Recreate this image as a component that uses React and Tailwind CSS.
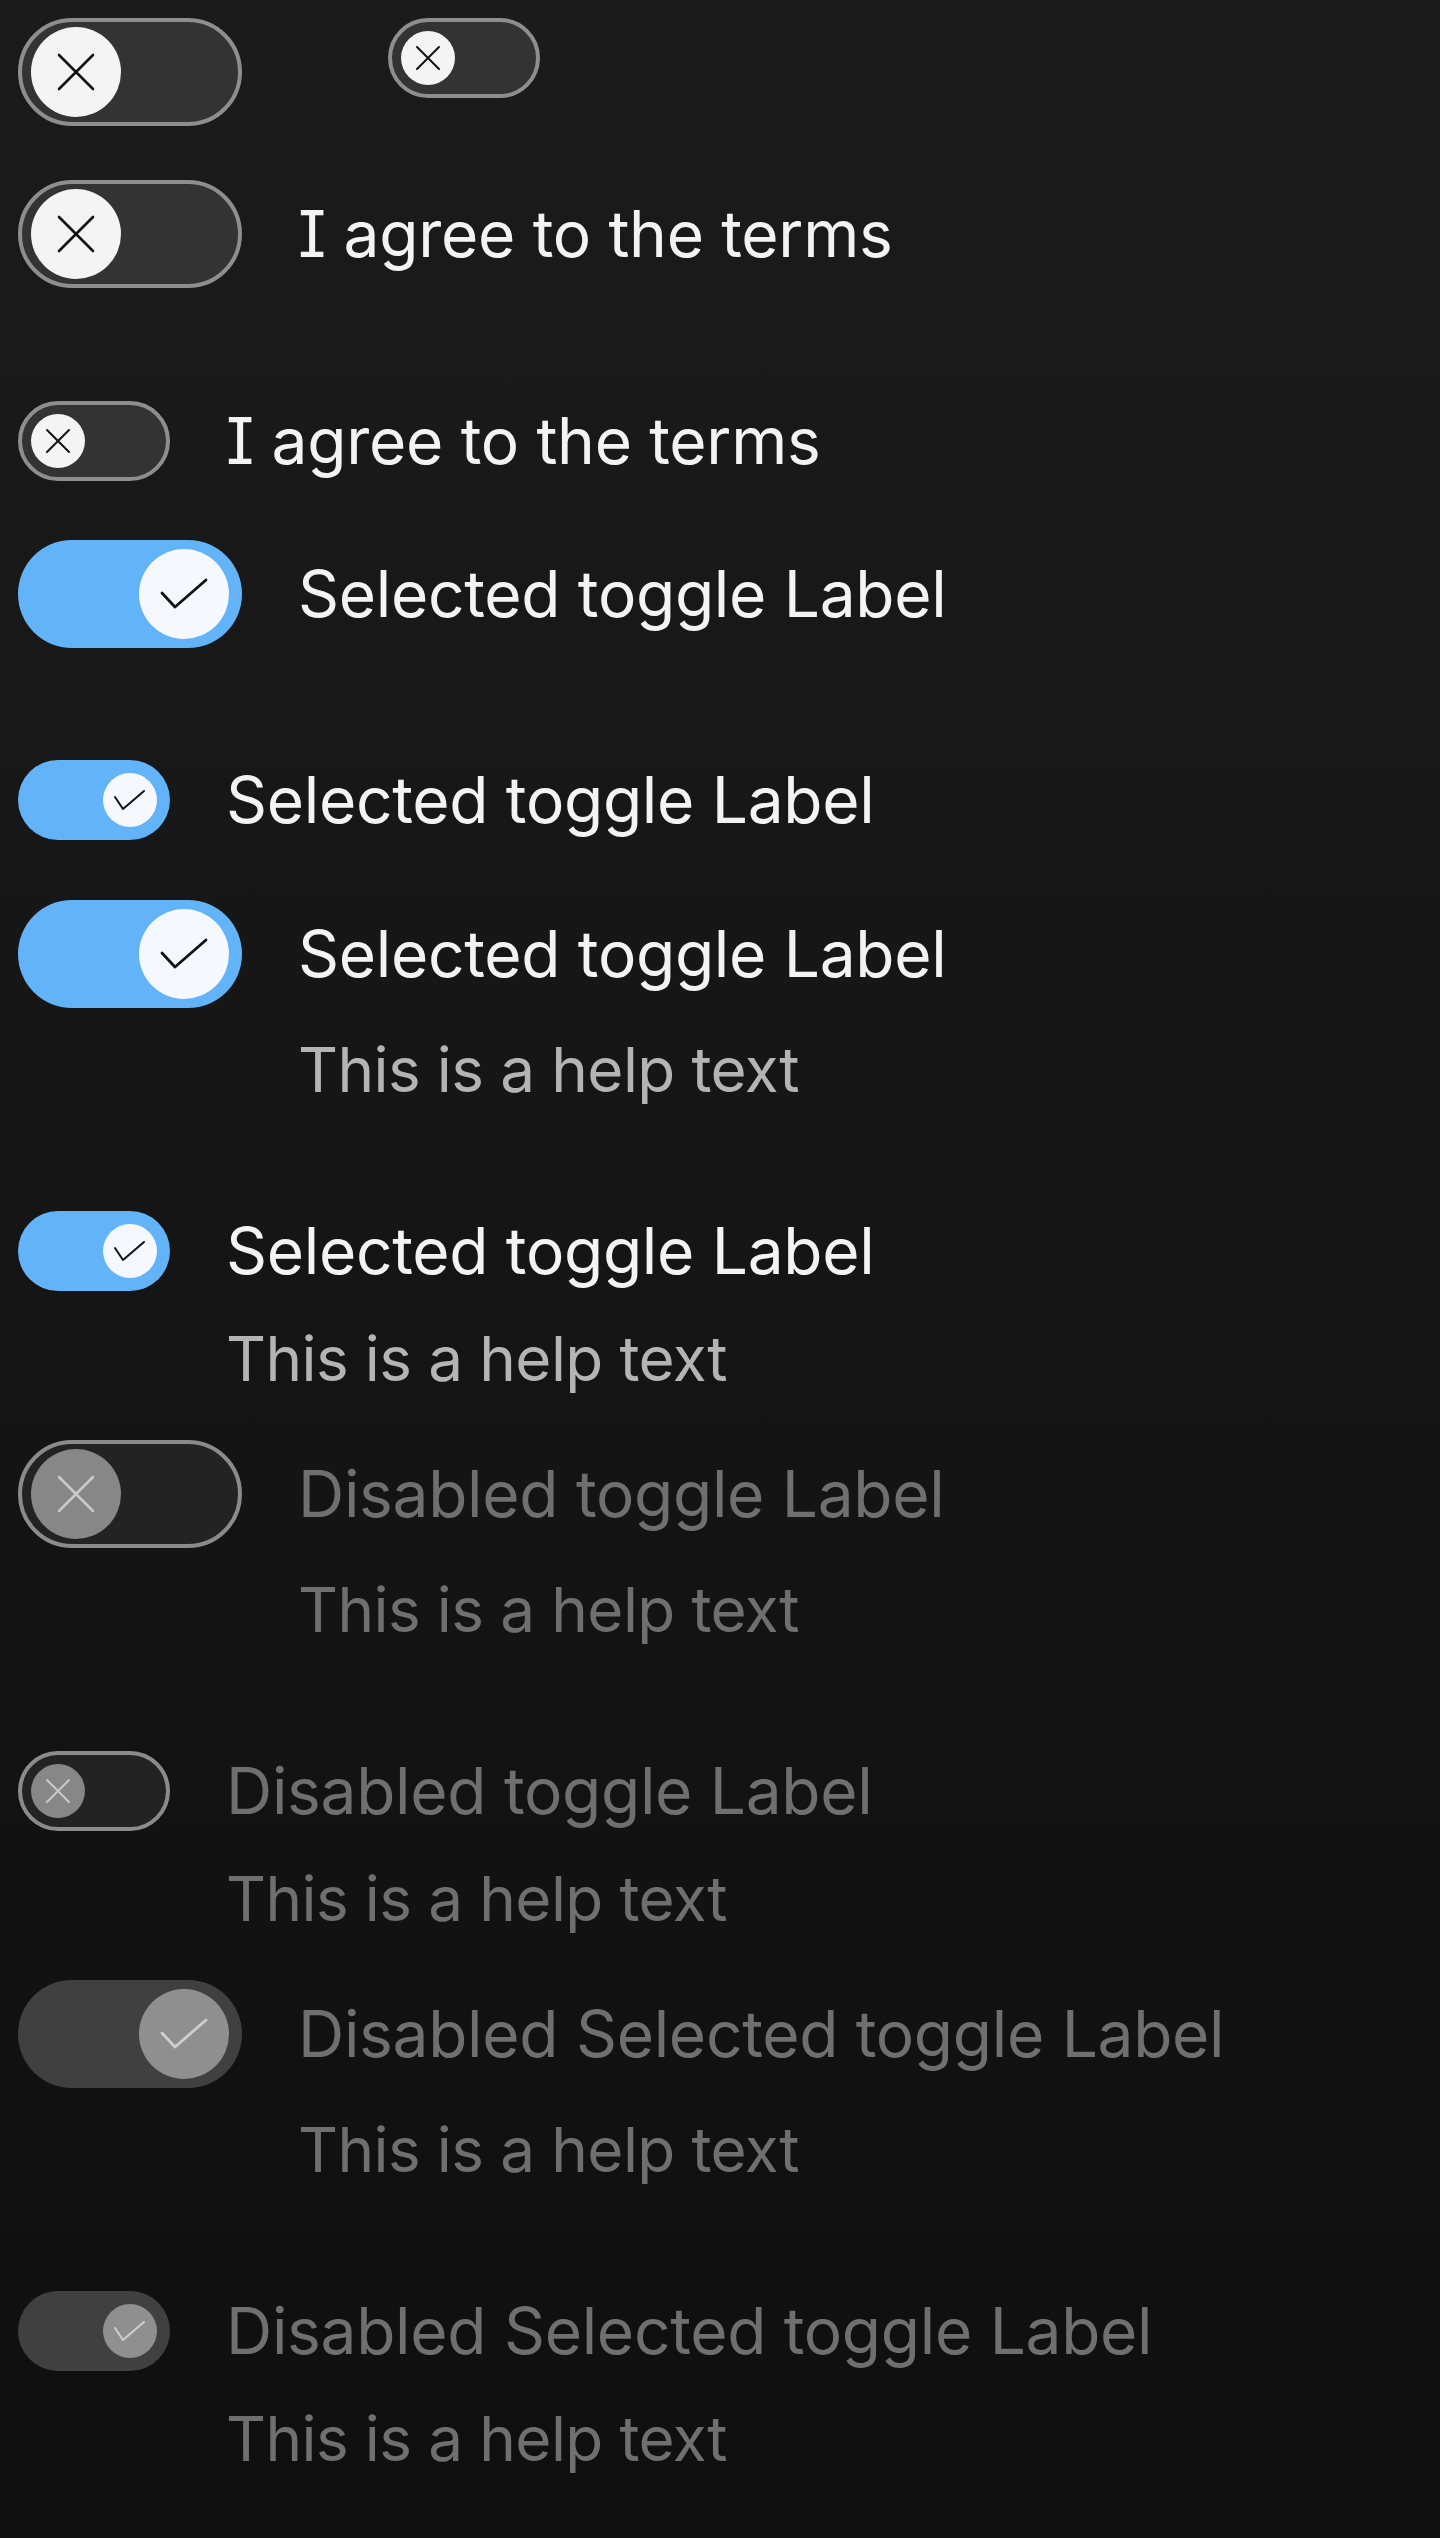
import React from 'react';

// knob glyphs, drawn in the knob's own box
const XMark = ({ big, color }) => (
    big ? (
        <svg width="90" height="90" viewBox="0 0 90 90">
            <path d="M28 28 L62 62 M62 28 L28 62" stroke={color} strokeWidth="2.6" strokeLinecap="round" fill="none" />
        </svg>
    ) : (
        <svg width="54" height="54" viewBox="0 0 54 54">
            <path d="M16 16 L38 38 M38 16 L16 38" stroke={color} strokeWidth="2" strokeLinecap="round" fill="none" />
        </svg>
    )
);

const CheckMark = ({ big, color }) => (
    big ? (
        <svg width="90" height="90" viewBox="0 0 90 90">
            <path d="M23 44 L36 58 L67 31" stroke={color} strokeWidth="2.8" strokeLinecap="round" strokeLinejoin="round" fill="none" />
        </svg>
    ) : (
        <svg width="54" height="54" viewBox="0 0 54 54">
            <path d="M12 24 L20 36 L41 18" stroke={color} strokeWidth="2" strokeLinecap="round" strokeLinejoin="round" fill="none" />
        </svg>
    )
);

const Toggle = ({ big = false, checked = false, disabled = false }) => {
    const size = big ? 'w-[224px] h-[108px]' : 'w-[152px] h-[80px]';
    const knob = big ? 'w-[90px] h-[90px]' : 'w-[54px] h-[54px]';

    let track;
    let knobColor;
    let mark;
    if (checked && !disabled) {
        track = 'bg-[#62b3f8] justify-end px-[13px]';
        knobColor = 'bg-[#f5f9ff]';
        mark = <CheckMark big={big} color="#111111" />;
    } else if (checked && disabled) {
        track = 'bg-[#404040] justify-end px-[13px]';
        knobColor = 'bg-[#8f8f8f]';
        mark = <CheckMark big={big} color="#cfcfcf" />;
    } else if (disabled) {
        track = 'bg-[#232323] border-4 border-[#8b8b8b] justify-start px-[9px]';
        knobColor = 'bg-[#878787]';
        mark = <XMark big={big} color="#c9c9c9" />;
    } else {
        track = 'bg-[#333333] border-4 border-[#8e8e8e] justify-start px-[9px]';
        knobColor = 'bg-[#f4f4f4]';
        mark = <XMark big={big} color="#111111" />;
    }

    return (
        <div className={`shrink-0 rounded-full flex items-center ${size} ${track}`}>
            <div className={`rounded-full flex items-center justify-center ${knob} ${knobColor}`}>
                {mark}
            </div>
        </div>
    );
};

const Row = ({ big, checked, disabled, label, help, className = '' }) => {
    const labelBox = big ? 'h-[108px]' : 'h-[80px]';
    const labelColor = disabled ? 'text-[#6f6f6f]' : 'text-[#f3f3f3]';
    const helpColor = disabled ? 'text-[#6f6f6f]' : 'text-[#b4b4b4]';
    return (
        <div className={`flex items-start gap-[56px] ${className}`}>
            <Toggle big={big} checked={checked} disabled={disabled} />
            <div className="flex flex-col">
                <div className={`flex items-center whitespace-nowrap leading-none tracking-[-0.3px] ${labelBox} ${labelColor}`}>{label}</div>
                {help && (
                    <div className={`whitespace-nowrap text-[62px] leading-[96px] tracking-[-0.6px] ${big ? 'mt-[14px]' : 'mt-[20px]'} ${helpColor}`}>{help}</div>
                )}
            </div>
        </div>
    );
};

export default function App() {
    return (
        <div className="min-h-screen bg-gradient-to-b from-[#1b1b1b] to-[#0f0f0f] pl-[18px] pt-[18px] font-['Inter',sans-serif] text-[64px] [font-feature-settings:'cv08']">
            {/* bare toggles */}
            <div className="flex items-start gap-[146px]">
                <Toggle big />
                <Toggle />
            </div>

            <Row big label="I agree to the terms" className="mt-[54px]" />
            <Row label="I agree to the terms" className="mt-[113px]" />

            <Row big checked label="Selected toggle Label" className="mt-[59px]" />
            <Row checked label="Selected toggle Label" className="mt-[112px]" />

            <Row big checked label="Selected toggle Label" help="This is a help text" className="mt-[60px]" />
            <Row checked label="Selected toggle Label" help="This is a help text" className="mt-[93px]" />

            <Row big disabled label="Disabled toggle Label" help="This is a help text" className="mt-[33px]" />
            <Row disabled label="Disabled toggle Label" help="This is a help text" className="mt-[93px]" />

            <Row big checked disabled label="Disabled Selected toggle Label" help="This is a help text" className="mt-[33px]" />
            <Row checked disabled label="Disabled Selected toggle Label" help="This is a help text" className="mt-[93px]" />
        </div>
    );
}
